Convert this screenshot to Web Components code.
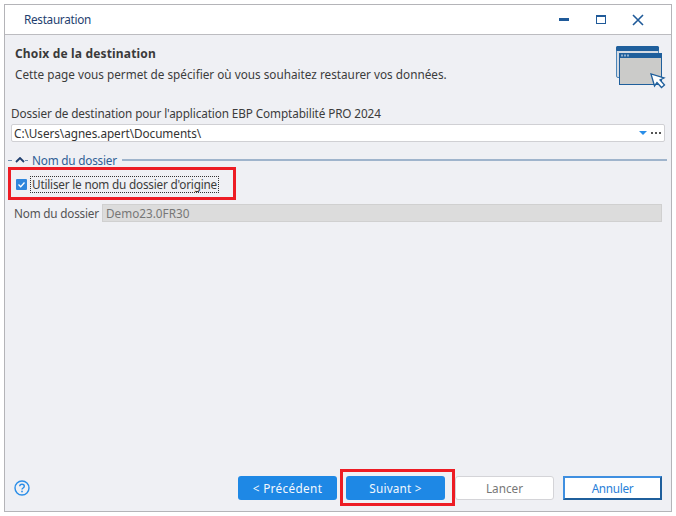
<!DOCTYPE html>
<html lang="fr">
<head>
<meta charset="utf-8">
<title>Restauration</title>
<style>
  html, body { margin: 0; background: #fff; }
  body { padding: 4px; font: 11.75px "Noto Sans", "Open Sans", sans-serif; color: #3c3c3c; }
</style>
</head>
<body>
<restore-window heading="Restauration">
  <wizard-header slot="top" title-text="Choix de la destination">Cette page vous permet de spécifier où vous souhaitez restaurer vos données.</wizard-header>
  <path-field label="Dossier de destination pour l'application EBP Comptabilité PRO 2024" value="C:\Users\agnes.apert\Documents\"></path-field>
  <folder-group legend="Nom du dossier"></folder-group>
  <wizard-footer slot="bottom"></wizard-footer>
</restore-window>

<script>
class restoreWindow extends HTMLElement {
  constructor() {
    super();
    this.attachShadow({ mode: "open" });
  }
  connectedCallback() {
    this.shadowRoot.innerHTML = `
    <style>
      :host { display: flex; flex-direction: column; box-sizing: border-box; width: 668px; height: 508px; border: 1px solid #b4b4b8; background: #eff0f4; }
      .bar { display: flex; align-items: center; height: 29px; background: #fff; border-bottom: 1px solid #bcbcc0; padding-left: 19px; color: #1f3f6f; letter-spacing: -.3px; }
      .bar span { flex: 1; margin-top: -2px; }
      .ctl { display: flex; }
      .ctl div { display: flex; justify-content: center; align-items: center; width: 37px; height: 29px; }
      main { flex: 1; display: flex; flex-direction: column; }
    </style>
    <div class="bar">
      <span>${this.getAttribute("heading")}</span>
      <div class="ctl">
        <div><svg width="12" height="12" viewBox="0 0 12 12"><rect x="1" y="4" width="10" height="3" fill="#1f5a99"/></svg></div>
        <div><svg width="12" height="12" viewBox="0 0 12 12"><rect x="1.5" y="1.500" width="9" height="8" fill="none" stroke="#1f5a99"/><rect x="1" y="1" width="10" height="2" fill="#1f5a99"/></svg></div>
        <div style="margin-right:15px"><svg width="12" height="12" viewBox="0 0 12 12"><path d="M1 1l10 10M11 1L1 11" stroke="#1f5a99" stroke-width="1.600" fill="none"/></svg></div>
      </div>
    </div>
    <slot name="top"></slot>
    <main><slot></slot></main>
    <slot name="bottom"></slot>`;
  }
}

class wizardHeader extends HTMLElement {
  constructor() {
    super();
    this.attachShadow({ mode: "open" });
  }
  connectedCallback() {
    this.shadowRoot.innerHTML = `
    <style>
      :host { display: flex; height: 69px; box-sizing: border-box; padding: 10px 5px 0 10px; }
      .txt { flex: 1; }
      b { display: block; font-size: 12px; line-height: 17px; color: #3a3a3a; letter-spacing: .17px; }
      p { margin: 4px 0 0; line-height: 16px; }
      svg { margin-top: 1px; }
    </style>
    <div class="txt"><b>${this.getAttribute("title-text")}</b><p><slot></slot></p></div>
    <svg width="50" height="46" viewBox="0 0 50 46">
      <rect x=".5" y=".5" width="42" height="31" rx="1.500" fill="#d5dbe3" stroke="#4d86b8"/>
      <rect x="0" y="0" width="43" height="5" rx="1.500" fill="#1f5f9c"/>
      <rect x="3.500" y="7.500" width="42" height="31" fill="#cbcbc9" stroke="#1f5f9c"/>
      <rect x="3" y="7" width="43" height="5" rx="1" fill="#1f5f9c"/>
      <path d="M5.500 9.500h1M8.500 9.500h1M11.500 9.500h1" stroke="#fff" stroke-width="2"/>
      <path d="M35 28l3.500 12 2.500-3.500 4.500 5 3-2.500-4.500-5 4-2z" fill="#fff" stroke="#1f5f9c" stroke-width="1.300"/>
    </svg>`;
  }
}

class pathField extends HTMLElement {
  constructor() {
    super();
    this.attachShadow({ mode: "open" });
  }
  connectedCallback() {
    this.shadowRoot.innerHTML = `
    <style>
      :host { display: block; padding: 0 6px; }
      label { display: block; line-height: 16px; margin: 1px 0 3px; letter-spacing: -.11px; }
      .box { display: flex; align-items: center; height: 16px; background: #fff; border: 1px solid #d0d0d4; border-radius: 2px; padding: 0 3px 0 2px; color: #333; letter-spacing: -.05px; }
      .box span { flex: 1; }
      i { width: 0; height: 0; border: 4px solid transparent; border-top: 4px solid #2a8ee8; border-bottom: 0; margin-right: 4px; }
    </style>
    <label>${this.getAttribute("label")}</label>
    <div class="box"><span>${this.getAttribute("value")}</span><i></i><svg width="10" height="2" viewBox="0 0 10 2"><path d="M0 0h2v2H0zM4 0h2v2H4zM8 0h2v2H8z" fill="#555"/></svg></div>`;
  }
}

class folderGroup extends HTMLElement {
  constructor() {
    super();
    this.attachShadow({ mode: "open" });
  }
  connectedCallback() {
    this.shadowRoot.innerHTML = `
    <style>
      :host { display: block; padding: 0 4px 0 3px; margin-top: 10px; }
      .leg { display: flex; align-items: center; height: 16px; color: #2f5f96; gap: 2px; letter-spacing: -.2px; }
      .leg hr { flex: 1; border: 0; height: 2px; background: #9fb4cc; margin: 0 0 1px 3px; }
      .leg em { width: 4px; height: 1px; background: #6f8fb0; }
      .leg em + svg + em { width: 3px; }
      .leg svg { margin: 0 -2px 0 1px; }
      .leg span { margin-left: 2px; }
      .chk { display: flex; align-items: center; height: 17px; margin: 8px 0 0 8px; gap: 4px; }
      .chk span { outline: 1px dotted #333; padding: 0 1px; line-height: 15px; letter-spacing: -.2px; white-space: nowrap; }
      .cb { width: 11px; height: 11px; background: #2f86dc; border-radius: 1px; display: flex; }
      .row { display: flex; align-items: center; margin: 11px 5px 0 6px; gap: 3px; color: #555; letter-spacing: -.2px; }
      .row div { flex: 1; height: 16px; line-height: 16px; background: #dcdcdc; border: 1px solid #d0d0d0; padding-left: 3px; color: #777; letter-spacing: 0; }
    </style>
    <div class="leg"><em></em><svg width="10" height="6" viewBox="0 0 10 6"><path d="M1 5l4-4 4 4" fill="none" stroke="#1f3f6f" stroke-width="1.800"/></svg><em></em><span>${this.getAttribute("legend")}</span><hr></div>
    <div class="chk"><div class="cb"><svg width="11" height="11" viewBox="0 0 11 11"><path d="M2.500 5.500l2.200 2.200L8.500 3.500" fill="none" stroke="#fff" stroke-width="1.300"/></svg></div><span>Utiliser le nom du dossier d'origine</span></div>
    <div class="row"><label>Nom du dossier</label><div>Demo23.0FR30</div></div>`;
  }
}

class wizButton extends HTMLElement {
  constructor() {
    super();
    this.attachShadow({ mode: "open" });
  }
  connectedCallback() {
    this.shadowRoot.innerHTML = `
    <style>
      :host { display: flex; justify-content: center; align-items: center; box-sizing: border-box; width: 99px; height: 24px; border-radius: 3px; background: #1e88e5; color: #f4f8fd; }
      :host([kind="off"]) { background: #fff; color: #777; border: 1px solid #d4d4d8; margin-left: 1px; }
      :host([kind="line"]) { background: #fff; color: #2a80d8; border: 2px solid #1f5f9c; border-top-color: #3f8fe0; border-left-color: #3f8fe0; border-radius: 0; }
    </style>
    <slot></slot>`;
  }
}

class redMark extends HTMLElement {
  constructor() {
    super();
    this.attachShadow({ mode: "open" });
  }
  connectedCallback() {
    this.shadowRoot.innerHTML = `
    <style>
      :host { position: absolute; box-sizing: border-box; border: 3px solid #ed1c24; pointer-events: none; }
    </style>`;
  }
}

class wizardFooter extends HTMLElement {
  constructor() {
    super();
    this.attachShadow({ mode: "open" });
  }
  connectedCallback() {
    this.shadowRoot.innerHTML = `
    <style>
      :host { display: flex; align-items: center; height: 24px; padding: 0 9px 11px 9px; gap: 9px; }
      svg { margin-right: auto; }
    </style>
    <svg width="16" height="16" viewBox="0 0 16 16"><circle cx="8" cy="8" r="7" fill="none" stroke="#2a8ee8" stroke-width="1.400"/><path d="M5.700 6.200C5.800 4.800 6.800 4.200 8 4.200c1.300 0 2.300.8 2.300 2 0 1.800-2.300 1.700-2.300 3.400" fill="none" stroke="#2a8ee8" stroke-width="1.400"/><rect x="7.200" y="10.700" width="1.600" height="1.600" fill="#2a8ee8"/></svg>
    <wiz-button style="letter-spacing:.35px">&lt; Précédent</wiz-button>
    <wiz-button style="letter-spacing:.2px">Suivant &gt;</wiz-button>
    <wiz-button kind="off">Lancer</wiz-button>
    <wiz-button kind="line" style="letter-spacing:-.3px">Annuler</wiz-button>`;
  }
}

customElements.define("restore-window", restoreWindow);
customElements.define("wizard-header", wizardHeader);
customElements.define("path-field", pathField);
customElements.define("folder-group", folderGroup);
customElements.define("wiz-button", wizButton);
customElements.define("red-mark", redMark);
customElements.define("wizard-footer", wizardFooter);

// les deux cadres rouges passent au-dessus du contenu
[[8, 167, 228, 33], [340, 469, 115, 37]].forEach(([x, y, w, h]) => {
  const m = document.createElement("red-mark");
  m.style.cssText = `left:${x}px;top:${y}px;width:${w}px;height:${h}px`;
  document.body.appendChild(m);
});
</script>
</body>
</html>
